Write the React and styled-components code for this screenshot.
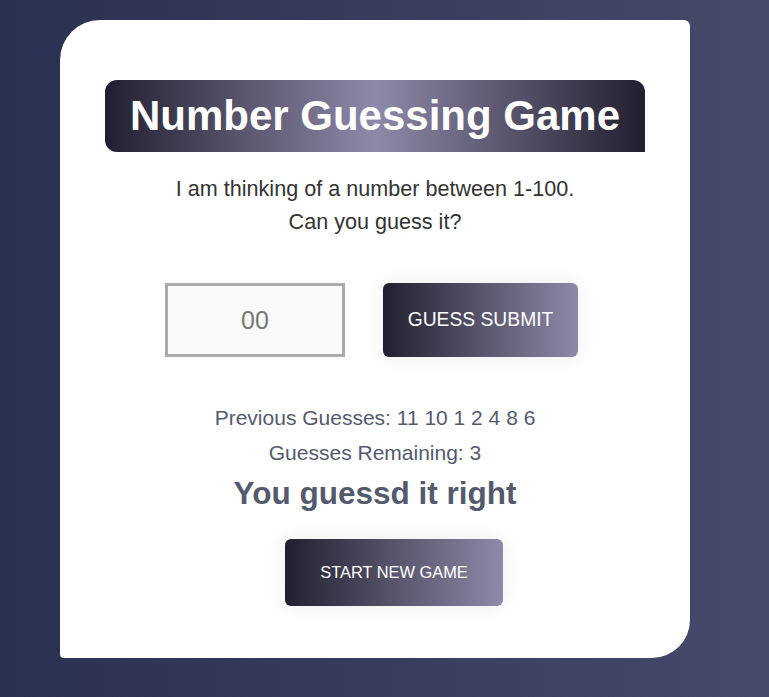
import styled, { createGlobalStyle } from "styled-components"

const GlobalStyle = createGlobalStyle`
  html, body {
    margin: 0;
    padding: 0;
  }
  body {
    min-height: 100vh;
    background: linear-gradient(to right, #2a3050, #474a6a);
    font-family: "Liberation Sans", Arial, sans-serif;
  }
`

const Page = styled.div`
  padding: 20px 0 0 60px;
`

const Card = styled.div`
  width: 630px;
  height: 638px;
  box-sizing: border-box;
  background: #fff;
  border-radius: 40px 6px 38px 4px;
  padding-top: 60px;
  display: flex;
  flex-direction: column;
  align-items: center;
`

const Banner = styled.h1`
  margin: 0;
  width: 540px;
  height: 72px;
  display: flex;
  align-items: center;
  justify-content: center;
  border-radius: 12px 12px 0 12px;
  background: linear-gradient(to right, #211f2f, #8e89a8, #211f2f);
  color: #fff;
  font-size: 42px;
  font-weight: 700;
`

const Intro = styled.p`
  margin: 20px 0 0;
  font-size: 21.6px;
  line-height: 33px;
  color: #333;
  text-align: center;
`

const GuessRow = styled.div`
  display: flex;
  gap: 38px;
  margin: 45px 7px 0 0;
`

const GuessInput = styled.input`
  width: 180px;
  height: 74px;
  box-sizing: border-box;
  border: 3px solid #aaa;
  background: #fafafa;
  text-align: center;
  font-family: inherit;
  font-size: 25px;
  color: #777;
  outline: none;

  &::placeholder {
    color: #777;
  }
`

const GradientButton = styled.button`
  width: ${(p) => p.$width}px;
  height: ${(p) => p.$height}px;
  border: none;
  border-radius: 6px;
  background: linear-gradient(to right, #211f2f, #8e89a8);
  color: #fff;
  font-family: inherit;
  font-size: ${(p) => p.$size}px;
  box-shadow: 0 0 20px rgba(0, 0, 0, 0.08);
  cursor: pointer;
`

const Stat = styled.p`
  margin: 0;
  font-size: 21px;
  line-height: 35px;
  color: #545a6e;
`

const Stats = styled.div`
  margin-top: 43px;
  display: flex;
  flex-direction: column;
  align-items: center;
`

const Result = styled.h2`
  margin: 3px 0 0;
  font-size: 31.5px;
  line-height: 40px;
  font-weight: 700;
  color: #545a6e;
`

const Restart = styled.div`
  margin: 26px 0 0 38px;
`

export default function App() {
  const guesses = [11, 10, 1, 2, 4, 8, 6]
  return (
    <>
      <GlobalStyle />
      <Page>
        <Card>
          <Banner>Number Guessing Game</Banner>
          <Intro>
            I am thinking of a number between 1-100.
            <br />
            Can you guess it?
          </Intro>
          <GuessRow>
            <GuessInput type="text" placeholder="00" />
            <GradientButton $width={195} $height={74} $size={19.3}>
              GUESS SUBMIT
            </GradientButton>
          </GuessRow>
          <Stats>
            <Stat>Previous Guesses: {guesses.join(" ")}</Stat>
            <Stat>Guesses Remaining: 3</Stat>
            <Result>You guessd it right</Result>
          </Stats>
          <Restart>
            <GradientButton $width={218} $height={67} $size={16.4}>
              START NEW GAME
            </GradientButton>
          </Restart>
        </Card>
      </Page>
    </>
  )
}
